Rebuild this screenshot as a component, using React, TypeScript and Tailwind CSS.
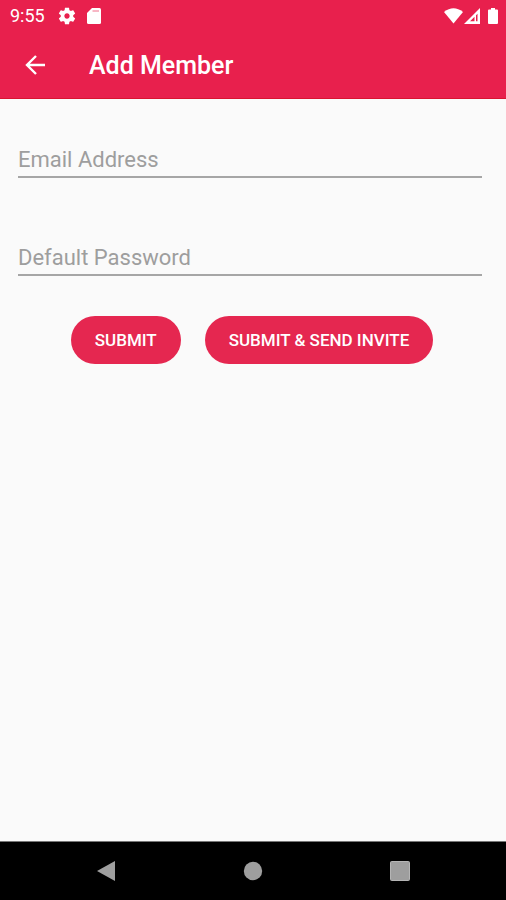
import type { InputHTMLAttributes } from 'react'

function StatusBar() {
  return (
    <div className="flex h-8 items-center justify-between pl-2.5 pr-2 text-white">
      <div className="flex items-center">
        <span className="text-lg leading-8">9:55</span>
        {/* Settings */}
        <svg className="ml-3 h-5 w-5" viewBox="0 0 24 24" fill="currentColor" aria-hidden="true">
          <path d="M19.43 12.98c.04-.32.07-.64.07-.98s-.03-.66-.07-.98l2.11-1.65c.19-.15.24-.42.12-.64l-2-3.46c-.12-.22-.39-.3-.61-.22l-2.49 1c-.52-.4-1.08-.73-1.69-.98l-.38-2.65C14.46 2.18 14.25 2 14 2h-4c-.25 0-.46.18-.49.42l-.38 2.65c-.61.25-1.17.59-1.69.98l-2.49-1c-.23-.09-.49 0-.61.22l-2 3.46c-.13.22-.07.49.12.64l2.11 1.65c-.04.32-.07.65-.07.98s.03.66.07.98l-2.11 1.65c-.19.15-.24.42-.12.64l2 3.46c.12.22.39.3.61.22l2.49-1c.52.4 1.08.73 1.69.98l.38 2.65c.03.24.24.42.49.42h4c.25 0 .46-.18.49-.42l.38-2.65c.61-.25 1.17-.59 1.69-.98l2.49 1c.23.09.49 0 .61-.22l2-3.46c.12-.22.07-.49-.12-.64l-2.11-1.65zM12 15.2c-1.77 0-3.200-1.430-3.200-3.200s1.430-3.200 3.200-3.200 3.200 1.430 3.200 3.200-1.430 3.200-3.200 3.200z" />
        </svg>
        {/* SD card */}
        <svg className="ml-2.5 h-4 w-3.5" viewBox="0 0 14 16" aria-hidden="true">
          <path d="M5 0h7.500Q14 0 14 1.500v13Q14 16 12.500 16h-11Q0 16 0 14.500V5z" fill="currentColor" />
          <path d="M5.500 3H12" stroke="#e8204d" strokeWidth="1.600" opacity="0.4" />
        </svg>
      </div>
      <div className="flex items-center">
        {/* Wi-Fi */}
        <svg className="h-4 w-5" viewBox="0 0 20 16" fill="currentColor" aria-hidden="true">
          <path d="M9.500 15.500 0 4Q9.500-3.500 19 4z" />
        </svg>
        {/* Mobile signal */}
        <svg className="h-4 w-4" viewBox="0 0 16 16" aria-hidden="true">
          <path d="M0 16 16 0v16zM6 13.200h4.500V8.700zM12 13.200h1.500V5.700L12 7.200z" fill="currentColor" fillRule="evenodd" />
        </svg>
        {/* Battery */}
        <svg className="ml-2 h-4 w-2.5" viewBox="0 0 10 16" fill="currentColor" aria-hidden="true">
          <path d="M3 0h4v1.500h2q1 0 1 1V15q0 1-1 1H1q-1 0-1-1V2.500q0-1 1-1h2z" />
        </svg>
      </div>
    </div>
  )
}

function Field({ label, ...rest }: { label: string } & InputHTMLAttributes<HTMLInputElement>) {
  return (
    <input
      aria-label={label}
      placeholder={label}
      className="block h-[38px] w-full rounded-none border-b-2 border-[#a6a6a6] bg-transparent pt-0.5 text-[22px] text-[#212121] outline-none placeholder:text-[#9e9e9e] focus:border-[#e8204d]"
      {...rest}
    />
  )
}

function PillButton({ children, type = 'submit' }: { children: string; type?: 'submit' | 'button' }) {
  return (
    <button type={type} className="h-12 rounded-full bg-[#e52750] px-6 pt-0.5 text-[17px] font-medium text-white">
      {children}
    </button>
  )
}

export default function App() {
  return (
    <div className="flex min-h-screen flex-col bg-[#fafafa] font-['Roboto',sans-serif]">
      <header className="border-b border-[#d91430] bg-[#e8204d]">
        <StatusBar />
        <div className="flex h-[66px] items-center pl-6">
          <button type="button" aria-label="Back" className="text-white">
            <svg className="h-6 w-6" viewBox="0 0 24 24" fill="none" stroke="currentColor" strokeWidth="2.400" aria-hidden="true">
              <path d="M21 12H3M12 3l-9 9 9 9" />
            </svg>
          </button>
          <h1 className="ml-[41px] pt-0.5 text-[25px] font-medium text-white">Add Member</h1>
        </div>
      </header>

      <main className="flex-1">
        <form className="pt-[41px]" onSubmit={(e) => e.preventDefault()}>
          <div className="space-y-[60px] pl-[18px] pr-6">
            <Field label="Email Address" type="email" name="email" />
            <Field label="Default Password" type="password" name="password" />
          </div>
          <div className="mt-10 flex flex-wrap justify-center gap-6 pr-0.5">
            <PillButton>SUBMIT</PillButton>
            <PillButton type="button">SUBMIT &amp; SEND INVITE</PillButton>
          </div>
        </form>
      </main>

      {/* System navigation */}
      <nav className="flex h-[59px] items-center justify-around border-t border-[#777777] bg-black px-8 text-[#9e9e9e]">
        <button type="button" aria-label="Back">
          <svg className="h-5 w-5" viewBox="0 0 20 20" fill="currentColor" aria-hidden="true">
            <path d="M19 0v20L1 10z" />
          </svg>
        </button>
        <button type="button" aria-label="Home">
          <svg className="h-5 w-5" viewBox="0 0 20 20" fill="currentColor" aria-hidden="true">
            <circle cx="10" cy="10" r="9.200" />
          </svg>
        </button>
        <button type="button" aria-label="Recent apps">
          <svg className="h-5 w-5" viewBox="0 0 20 20" aria-hidden="true">
            <rect x="0.500" y="0.500" width="19" height="19" rx="1" fill="#9e9e9e" stroke="#b5b5b5" />
          </svg>
        </button>
      </nav>
    </div>
  )
}
